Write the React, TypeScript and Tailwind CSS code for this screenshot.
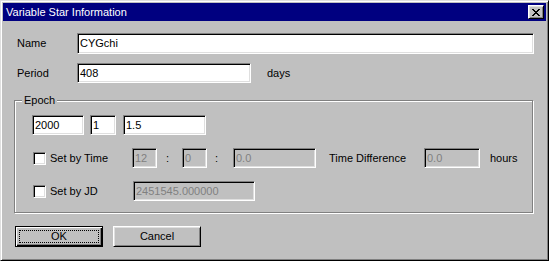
import type { ReactNode } from 'react';

const sunken =
  'border border-t-[#808080] border-l-[#808080] border-r-white border-b-white shadow-[inset_1px_1px_0_#000,inset_-1px_-1px_0_#dfdfdf]';

function Field({ value, width, height = 'h-[20px]', disabled = false }: { value: string; width: string; height?: string; disabled?: boolean }) {
  return (
    <div
      className={`${sunken} ${width} ${height} flex items-center pl-[2px] overflow-hidden whitespace-nowrap ${
        disabled ? 'bg-[#c0c0c0] text-[#808080]' : 'bg-white text-black'
      }`}
    >
      {value}
    </div>
  );
}

function Check({ label, width }: { label: string; width: string }) {
  return (
    <div className={`flex items-center ${width} pl-[18px]`}>
      <div className={`${sunken} w-[13px] h-[13px] bg-white`} />
      <span className="ml-[4px]">{label}</span>
    </div>
  );
}

function Button({ children, isDefault = false }: { children: ReactNode; isDefault?: boolean }) {
  if (isDefault) {
    return (
      <div className="w-[88px] h-[21px] border border-black shadow-[inset_1px_1px_0_#fff,inset_-1px_-1px_0_#000,inset_-2px_-2px_0_#808080] p-[3px] flex">
        <div className="flex-1 border border-dotted border-black flex items-center justify-center leading-none">
          {children}
        </div>
      </div>
    );
  }
  return (
    <div className="w-[88px] h-[21px] border border-t-white border-l-white border-r-black border-b-black shadow-[inset_1px_1px_0_#dfdfdf,inset_-1px_-1px_0_#808080] flex items-center justify-center">
      {children}
    </div>
  );
}

function CloseGlyph() {
  const rows = ['11000011', '01100110', '00111100', '00011000', '00111100', '01100110', '11000011'];
  return (
    <svg width="8" height="7" viewBox="0 0 8 7" shapeRendering="crispEdges">
      {rows.map((r, y) =>
        r.split('').map((c, x) => (c === '1' ? <rect key={`${x}-${y}`} x={x} y={y} width="1" height="1" fill="#000" /> : null))
      )}
    </svg>
  );
}

export default function App() {
  return (
    <div className="w-[549px] h-[261px] bg-[#c0c0c0] font-['Liberation_Sans',Arial,sans-serif] text-[11px] text-black">
      {/* Window frame */}
      <div className="w-full h-full border border-t-[#dfdfdf] border-l-[#dfdfdf] border-r-black border-b-black shadow-[inset_1px_1px_0_#fff,inset_-1px_-1px_0_#808080] p-[2px] flex flex-col">
        {/* Title bar */}
        <div className="h-[18px] bg-[#000080] flex items-center pl-[3px] pr-[2px]">
          <span className="text-white text-[11px] leading-none">Variable Star Information</span>
          <div className="ml-auto w-[16px] h-[14px] bg-[#c0c0c0] border border-t-white border-l-white border-r-black border-b-black shadow-[inset_1px_1px_0_#dfdfdf,inset_-1px_-1px_0_#808080] flex items-center justify-center">
            <CloseGlyph />
          </div>
        </div>

        {/* Client */}
        <div className="flex-1 flex flex-col pl-[11px] pt-[12px]">
          <div className="flex items-center">
            <span className="w-[63px] pl-[3px]">Name</span>
            <Field value="CYGchi" width="w-[457px]" height="h-[21px]" />
          </div>

          <div className="flex items-center mt-[9px]">
            <span className="w-[63px] pl-[3px]">Period</span>
            <Field value="408" width="w-[174px]" />
            <span className="ml-[16px]">days</span>
          </div>

          {/* Epoch group */}
          <div className="relative mt-[17px] w-[519px] h-[113px] border border-[#808080] shadow-[inset_1px_1px_0_#fff,1px_1px_0_#fff] flex flex-col">
            <span className="absolute -top-[8px] left-[7px] px-[2px] bg-[#c0c0c0] leading-[14px]">Epoch</span>

            <div className="flex items-center mt-[14px] pl-[17px]">
              <Field value="2000" width="w-[52px]" />
              <div className="ml-[6px]">
                <Field value="1" width="w-[26px]" />
              </div>
              <div className="ml-[7px]">
                <Field value="1.5" width="w-[83px]" />
              </div>
            </div>

            <div className="flex items-center mt-[13px]">
              <Check label="Set by Time" width="w-[117px]" />
              <Field value="12" width="w-[25px]" disabled />
              <span className="w-[25px] pl-[9px]">:</span>
              <Field value="0" width="w-[25px]" disabled />
              <span className="w-[26px] pl-[8px]">:</span>
              <Field value="0.0" width="w-[83px]" disabled />
              <span className="w-[108px] pl-[13px]">Time Difference</span>
              <Field value="0.0" width="w-[56px]" disabled />
              <span className="ml-[10px]">hours</span>
            </div>

            <div className="flex items-center mt-[13px]">
              <Check label="Set by JD" width="w-[118px]" />
              <Field value="2451545.000000" width="w-[122px]" disabled />
            </div>
          </div>

          <div className="flex mt-[13px] pl-[1px]">
            <Button isDefault>OK</Button>
            <div className="ml-[10px]">
              <Button>Cancel</Button>
            </div>
          </div>
        </div>
      </div>
    </div>
  );
}
